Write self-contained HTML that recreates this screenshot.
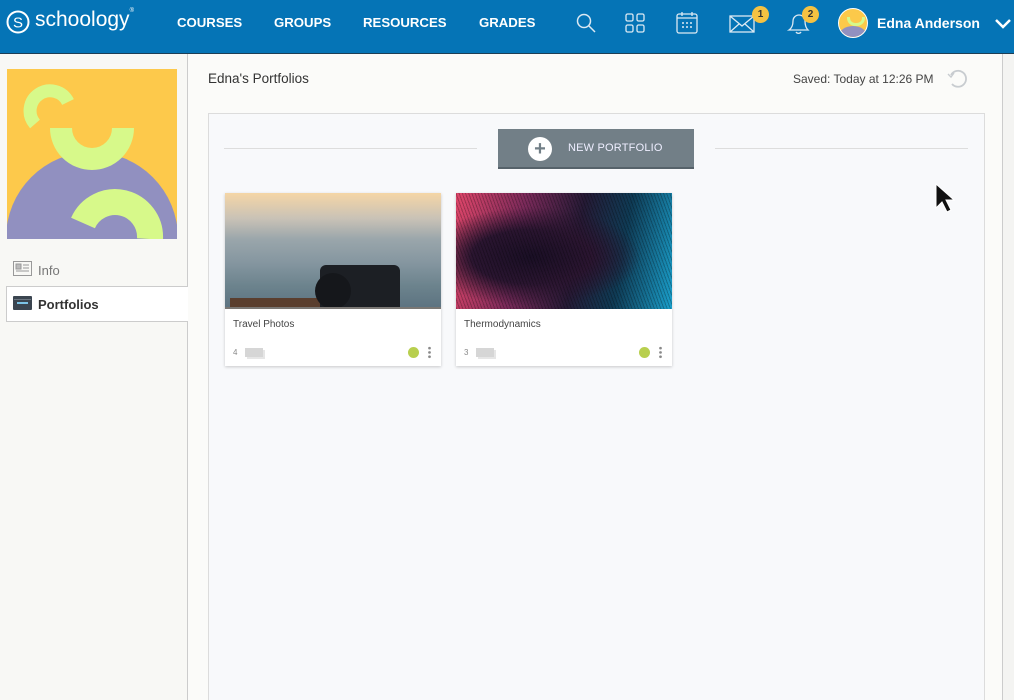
<!DOCTYPE html>
<html><head><style>
html,body{margin:0;width:1014px;height:700px;overflow:hidden}
body{font-family:"Liberation Sans",sans-serif;background:#fbfbf9;position:relative}
.hdr{position:absolute;left:0;top:0;width:1014px;height:53px;background:#0574b6;border-bottom:1px solid #1d3e55}
.nav{position:absolute;top:15px;color:#fff;font-size:13.2px;font-weight:bold;letter-spacing:0}
.side{position:absolute;left:0;top:54px;width:187px;height:646px;background:#f8f8f5;border-right:1px solid #ccc}
.abs{position:absolute}
.card{position:absolute;top:193px;width:216px;height:173px;background:#fff;box-shadow:0 1px 3px rgba(0,0,0,.2)}
.card .img{height:116px}
.card .t{position:absolute;left:8px;top:126px;font-size:10px;color:#444}
.card .n{position:absolute;left:8px;top:155px;font-size:8px;color:#888}
.card .st{position:absolute;left:20px;top:155px;width:18px;height:9px;background:#d6d6d6;box-shadow:2px 2px 0 #e6e6e6}
.card .dot{position:absolute;left:183px;top:154px;width:11px;height:11px;border-radius:50%;background:#b8cf4e}
.card .m{position:absolute;left:203px;top:153px;width:3px;height:13px;background:radial-gradient(circle,#888 1.2px,transparent 1.5px) 0 0/3px 4.3px}
</style></head><body>
<div class="hdr">
 <svg class="abs" style="left:6px;top:10px" width="24" height="24"><circle cx="12" cy="12" r="10.5" fill="none" stroke="#fff" stroke-width="2"/><text x="12" y="17.5" font-size="15" fill="#fff" text-anchor="middle" font-family="Liberation Sans">S</text></svg>
 <div class="abs" style="left:35px;top:8px;color:#fff;font-size:21px">schoology<span style="font-size:6px;vertical-align:top">®</span></div>
 <div class="nav" style="left:177px">COURSES</div>
 <div class="nav" style="left:274px">GROUPS</div>
 <div class="nav" style="left:363px">RESOURCES</div>
 <div class="nav" style="left:479px">GRADES</div>
 <svg class="abs" style="left:574px;top:11px" width="24" height="24" fill="none" stroke="#dce9f3" stroke-width="1.5"><circle cx="10" cy="10" r="6.5"/><path d="M15 15l6 6"/></svg>
 <svg class="abs" style="left:624px;top:12px" width="24" height="24" fill="none" stroke="#dce9f3" stroke-width="1.3"><rect x="2" y="2" width="7" height="7" rx="1.5"/><rect x="13" y="2" width="7" height="7" rx="1.5"/><rect x="2" y="13" width="7" height="7" rx="1.5"/><rect x="13" y="13" width="7" height="7" rx="1.5"/></svg>
 <svg class="abs" style="left:675px;top:11px" width="24" height="24" fill="none" stroke="#dce9f3" stroke-width="1.3"><rect x="2" y="3" width="20" height="19" rx="2"/><path d="M2 7h20M7 1v4M17 1v4"/><g fill="#dce9f3" stroke="none"><circle cx="8" cy="12" r="1"/><circle cx="12" cy="12" r="1"/><circle cx="16" cy="12" r="1"/><circle cx="8" cy="16" r="1"/><circle cx="12" cy="16" r="1"/><circle cx="16" cy="16" r="1"/></g></svg>
 <svg class="abs" style="left:729px;top:14px" width="28" height="20" fill="none" stroke="#dce9f3" stroke-width="1.3"><rect x="1" y="2" width="24" height="16"/><path d="M1 2l12 10 12-10M1 18l9-8M25 18l-9-8"/></svg>
 <div class="abs" style="left:752px;top:6px;width:17px;height:17px;border-radius:50%;background:#f5c242;color:#333;font-size:10px;font-weight:bold;text-align:center;line-height:17px">1</div>
 <svg class="abs" style="left:786px;top:12px" width="24" height="24" fill="none" stroke="#dce9f3" stroke-width="1.3"><path d="M3 18c3-2 4-5 4-9a6 6 0 0 1 12 0c0 4 1 7 3 9z"/><path d="M10 20a3 3 0 0 0 5 0"/></svg>
 <div class="abs" style="left:802px;top:6px;width:17px;height:17px;border-radius:50%;background:#f5c242;color:#333;font-size:10px;font-weight:bold;text-align:center;line-height:17px">2</div>
 <div class="abs" style="left:838px;top:8px;width:28px;height:28px;border-radius:50%;background:#fcc94a;border:1px solid #fff;overflow:hidden"><div style="position:absolute;left:0;top:17px;width:28px;height:20px;border-radius:50%;background:#9190c0"></div><div style="position:absolute;left:8px;top:8px;width:12px;height:6px;border:3px solid #d7f98a;border-top:none;border-radius:0 0 8px 8px"></div></div>
 <div class="abs" style="left:877px;top:15px;color:#fff;font-size:14px;font-weight:bold">Edna Anderson</div>
 <svg class="abs" style="left:994px;top:17px" width="18" height="14" fill="none" stroke="#fff" stroke-width="2.5"><path d="M2 3l7 7 7-7"/></svg>
</div>
<div class="side">
 <svg class="abs" style="left:7px;top:15px" width="170" height="170"><rect width="170" height="170" fill="#fdc94b"/><circle cx="85" cy="169" r="86" fill="#9190c0"/>
 <path d="M61 33A20 20 0 1 0 28 55" fill="none" stroke="#d7f98a" stroke-width="13"/>
 <path d="M54 59A31 31 0 0 0 116 59" fill="none" stroke="#d7f98a" stroke-width="22"/>
 <path d="M76 154A35 35 0 0 1 143 170" fill="none" stroke="#d7f98a" stroke-width="26"/></svg>
 <svg class="abs" style="left:13px;top:207px" width="19" height="16" fill="none" stroke="#999" stroke-width="1"><rect x="0.5" y="0.5" width="18" height="14"/><rect x="3" y="3" width="5" height="5" fill="#bbb"/><path d="M10 4h6M10 7h6M3 10h13"/></svg>
 <div class="abs" style="left:38px;top:209px;font-size:13px;color:#777">Info</div>
 <div class="abs" style="left:6px;top:232px;width:181px;height:34px;background:#fff;border:1px solid #ccc;border-right:none"></div>
 <svg class="abs" style="left:13px;top:242px" width="19" height="14"><rect x="0" y="0" width="19" height="14" rx="1" fill="#3b4550"/><rect x="4" y="6" width="11" height="2" fill="#7cc3e6"/><rect x="1" y="3" width="17" height="1" fill="#6b7580"/></svg>
 <div class="abs" style="left:38px;top:243px;font-size:13px;font-weight:bold;color:#333">Portfolios</div>
</div>
<div class="abs" style="left:1002px;top:54px;width:12px;height:646px;background:#f4f4f2;border-left:1px solid #ccc"></div>
<div class="abs" style="left:208px;top:71px;font-size:13.5px;color:#333">Edna's Portfolios</div>
<div class="abs" style="left:793px;top:72px;font-size:12px;color:#444">Saved: Today at 12:26 PM</div>
<svg class="abs" style="left:946px;top:67px" width="22" height="22" fill="none" stroke="#c8ccd0" stroke-width="1.8"><path d="M5 8a8 8 0 1 1 1 9"/><path d="M2 7l3 3 3-4" stroke-width="1.4"/></svg>
<div class="abs" style="left:208px;top:113px;width:775px;height:600px;background:#f8f9fb;border:1px solid #dcdcdc;border-bottom:none"></div>
<div class="abs" style="left:224px;top:148px;width:253px;height:1px;background:#ddd"></div>
<div class="abs" style="left:715px;top:148px;width:253px;height:1px;background:#ddd"></div>
<div class="abs" style="left:498px;top:129px;width:196px;height:38px;background:#727f87;border-bottom:2px solid #56626a"></div>
<div class="abs" style="left:528px;top:137px;width:24px;height:24px;border-radius:50%;background:#fff;color:#727f87;font-size:20px;font-weight:bold;text-align:center;line-height:24px">+</div>
<div class="abs" style="left:568px;top:142px;font-size:11px;color:#eef;letter-spacing:.2px">NEW PORTFOLIO</div>
<div class="card" style="left:225px">
 <div class="img" style="position:relative;background:linear-gradient(180deg,#f5d6a6 0%,#c9c2b6 22%,#9aa6ab 40%,#8596a0 60%,#6c838d 80%,#5c7280 100%);overflow:hidden">
  <div style="position:absolute;left:5px;top:105px;width:130px;height:11px;background:#5a3e2e"></div>
  <div style="position:absolute;left:95px;top:72px;width:80px;height:44px;background:#1c1f24;border-radius:6px 6px 0 0"></div>
  <div style="position:absolute;left:90px;top:80px;width:36px;height:36px;border-radius:50%;background:#15171b"></div>
  <div style="position:absolute;left:0;top:114px;width:216px;height:2px;background:#7a7774"></div>
 </div>
 <div class="t">Travel Photos</div><div class="n">4</div><div class="st"></div><div class="dot"></div><div class="m"></div>
</div>
<div class="card" style="left:456px">
 <div class="img" style="background:repeating-linear-gradient(70deg,rgba(0,0,0,.25) 0 1px,transparent 1px 3px),radial-gradient(ellipse at 35% 55%,#1a0f25 0%,#2a1530 30%,transparent 55%),linear-gradient(100deg,#e0466a 0%,#7a2a5a 30%,#251a35 55%,#0f3b55 75%,#1aa0cc 100%)"></div>
 <div class="t">Thermodynamics</div><div class="n">3</div><div class="st"></div><div class="dot"></div><div class="m"></div>
</div>
<svg class="abs" style="left:934px;top:182px" width="24" height="34"><path d="M2 2v24l6-6 5 10 4-2-5-10h8z" fill="#111" stroke="#fff" stroke-width="1"/></svg>
</body></html>
